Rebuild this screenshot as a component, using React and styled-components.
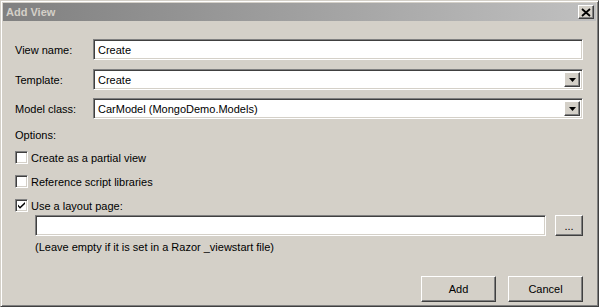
import React from "react";
import styled, { createGlobalStyle, css } from "styled-components";

const Global = createGlobalStyle`
  html, body { margin: 0; padding: 0; background: #d4d0c8; }
  body { font-family: Tahoma, "Liberation Sans", Arial, sans-serif; font-size: 11px; color: #000; }
`;

const raised = css`
  border: 1px solid;
  border-color: #ffffff #404040 #404040 #ffffff;
  box-shadow: inset -1px -1px 0 #808080, inset 1px 1px 0 #d4d0c8;
  background: #d4d0c8;
`;

const sunken = css`
  border: 1px solid;
  border-color: #808080 #ffffff #ffffff #808080;
  box-shadow: inset 1px 1px 0 #404040, inset -1px -1px 0 #d4d0c8;
  background: #ffffff;
`;

const Window = styled.div`
  box-sizing: border-box;
  width: 599px;
  height: 307px;
  border: 1px solid;
  border-color: #d4d0c8 #404040 #404040 #d4d0c8;
  box-shadow: inset 1px 1px 0 #ffffff, inset -1px -1px 0 #808080;
  padding: 2px;
  display: flex;
  flex-direction: column;
  background: #d4d0c8;
`;

const TitleBar = styled.div`
  height: 18px;
  flex: none;
  display: flex;
  align-items: center;
  justify-content: space-between;
  padding: 0 2px 0 3px;
  background: linear-gradient(to right, #808080, #c0c0c0);
`;

const Title = styled.span`
  font-weight: bold;
  font-size: 11px;
  color: #d4d0c8;
  letter-spacing: 0;
`;

const CloseButton = styled.div`
  ${raised};
  box-sizing: border-box;
  width: 16px;
  height: 14px;
  display: flex;
  align-items: center;
  justify-content: center;
`;

const Body = styled.div`
  flex: 1;
  display: flex;
  flex-direction: column;
  padding: 18px 13px 0 12px;
`;

const FieldRow = styled.div`
  display: flex;
  align-items: center;
  height: 21px;
  margin-bottom: ${(p) => p.$gap || 0}px;
`;

const Label = styled.label`
  width: 78px;
  flex: none;
`;

const TextBox = styled.div`
  ${sunken};
  box-sizing: border-box;
  flex: 1;
  height: 21px;
  display: flex;
  align-items: center;
  padding-left: 4px;
  white-space: nowrap;
  overflow: hidden;
`;

const Select = styled(TextBox)`
  padding-right: 2px;
  justify-content: space-between;
`;

const ArrowButton = styled.div`
  ${raised};
  box-sizing: border-box;
  width: 16px;
  height: 15px;
  display: flex;
  align-items: center;
  justify-content: center;
`;

const Section = styled.div`
  margin-top: 10px;
  height: 13px;
  line-height: 13px;
  margin-bottom: 9px;
`;

const CheckRow = styled.div`
  display: flex;
  align-items: center;
  height: 13px;
  gap: 3px;
  margin-bottom: ${(p) => p.$gap || 0}px;
`;

const Box = styled.div`
  ${sunken};
  box-sizing: border-box;
  width: 13px;
  height: 13px;
  flex: none;
  display: flex;
  align-items: center;
  justify-content: center;
`;

const Indented = styled.div`
  margin-left: 20px;
  display: flex;
  flex-direction: column;
`;

const LayoutRow = styled.div`
  display: flex;
  gap: 9px;
  height: 21px;
  margin-top: 3px;
`;

const Button = styled.button`
  ${raised};
  box-sizing: border-box;
  font: inherit;
  color: #000;
  width: ${(p) => p.$w}px;
  height: ${(p) => p.$h}px;
  padding: 0;
  display: flex;
  align-items: center;
  justify-content: center;
  flex: none;
`;

const Hint = styled.div`
  margin-top: 5px;
  height: 13px;
  line-height: 13px;
`;

const Footer = styled.div`
  display: flex;
  justify-content: flex-end;
  gap: 12px;
  margin-top: 22px;
`;

const Arrow = () => (
  <svg width="7" height="4" viewBox="0 0 7 4">
    <path d="M0 0h7L3.5 4z" fill="#000" />
  </svg>
);

const Check = () => (
  <svg width="9" height="9" viewBox="0 0 9 9">
    <path d="M1 3.5l2 2.2L8 1v2L3 7.7 1 5.5z" fill="#000" />
  </svg>
);

const X = () => (
  <svg width="10" height="9" viewBox="0 0 10 9">
    <path d="M1 1l8 7M9 1L1 8" stroke="#000" strokeWidth="1.8" />
  </svg>
);

export default function App() {
  return (
    <>
      <Global />
      <Window>
        <TitleBar>
          <Title>Add View</Title>
          <CloseButton>
            <X />
          </CloseButton>
        </TitleBar>
        <Body>
          <FieldRow $gap={9}>
            <Label>View name:</Label>
            <TextBox>Create</TextBox>
          </FieldRow>
          <FieldRow $gap={8}>
            <Label>Template:</Label>
            <Select>
              <span>Create</span>
              <ArrowButton>
                <Arrow />
              </ArrowButton>
            </Select>
          </FieldRow>
          <FieldRow>
            <Label>Model class:</Label>
            <Select>
              <span>CarModel (MongoDemo.Models)</span>
              <ArrowButton>
                <Arrow />
              </ArrowButton>
            </Select>
          </FieldRow>
          <Section>Options:</Section>
          <CheckRow $gap={11}>
            <Box />
            <span>Create as a partial view</span>
          </CheckRow>
          <CheckRow $gap={11}>
            <Box />
            <span>Reference script libraries</span>
          </CheckRow>
          <CheckRow>
            <Box>
              <Check />
            </Box>
            <span>Use a layout page:</span>
          </CheckRow>
          <Indented>
            <LayoutRow>
              <TextBox />
              <Button $w={28} $h={21}>...</Button>
            </LayoutRow>
            <Hint>(Leave empty if it is set in a Razor _viewstart file)</Hint>
          </Indented>
          <Footer>
            <Button $w={75} $h={26}>Add</Button>
            <Button $w={75} $h={26}>Cancel</Button>
          </Footer>
        </Body>
      </Window>
    </>
  );
}
